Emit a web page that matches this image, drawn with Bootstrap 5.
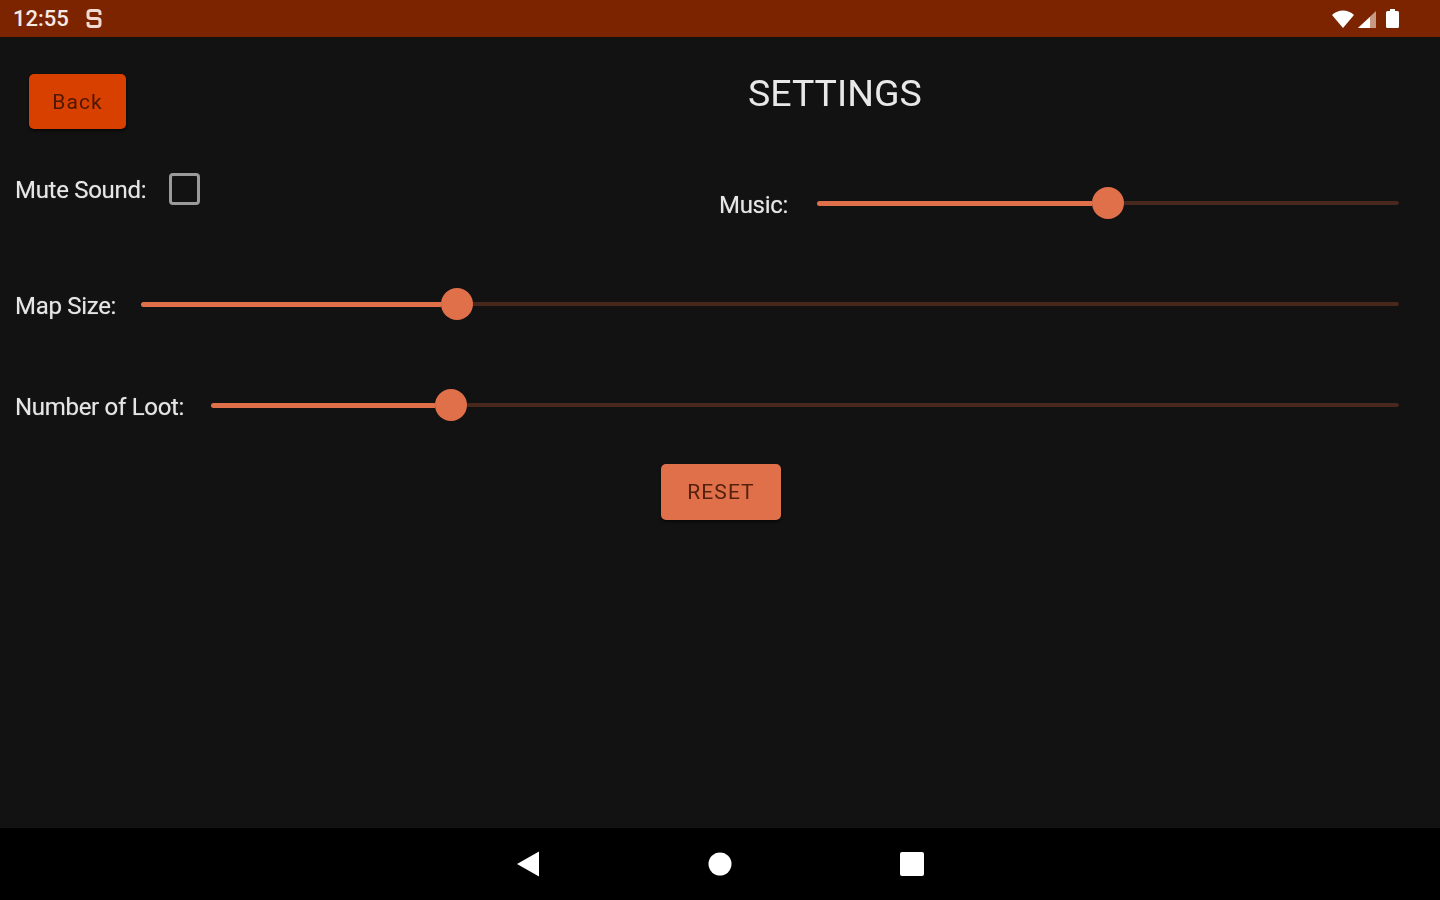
<!DOCTYPE html>
<html lang="en">
<head>
    <meta charset="UTF-8" />
    <meta name="viewport" content="width=device-width, initial-scale=1" />
    <title>Settings</title>
    <link href="https://cdn.jsdelivr.net/npm/bootstrap@5.3.0/dist/css/bootstrap.min.css" rel="stylesheet"/>
    <style>
        html, body { height: 100%; }
        body { background: #121212; color: #e6e6e6; font-family: Roboto, "Liberation Sans", sans-serif; overflow: hidden; }
        .phone-screen { height: 900px; filter: blur(.55px); }
        .status-strip { height: 37px; background: #7c2300; color: #f5e9e4; padding: 0 41px 0 13px; }
        .status-time { font-size: 22px; font-weight: 500; line-height: 1; }
        .status-note { margin-left: 17px; }
        .wifi-icon { margin-right: 3px; }
        .batt-icon { margin-left: 9px; }
        .settings-body { padding: 37px 41px 0 16px; }
        .top-row { height: 92px; }
        .btn-back, .btn-reset { border: 0; border-radius: 5px; font-size: 21px; line-height: 1; padding: 0; letter-spacing: 1.1px; box-shadow: 0 2px 3px rgba(0,0,0,.55); }
        .btn-back { width: 97px; height: 55px; margin-left: 13px; padding-top: 2px; background: #d84000; color: #4f1700; }
        .btn-reset { width: 120px; height: 56px; background: #e0704a; color: #55200c; }
        .page-title { font-size: 37.5px; font-weight: 400; line-height: 1; margin: 0 0 0 622px; padding-top: 1px; color: #e8e8e8; }
        .field-label { font-size: 24px; line-height: 1; letter-spacing: -.3px; white-space: nowrap; margin-top: 4px; margin-left: -1px; text-shadow: 0 0 1px rgba(255,255,255,.45); }
        .mute-row { height: 60px; }
        .mute-col { width: 704px; padding-top: 8px; }
        .music-col { padding-top: 21px; }
        .mute-box { width: 31px; height: 32px; border: 3px solid #9a9a9a; border-radius: 4px; margin-left: 23px; margin-top: -1px; }
        .slider-wrap { height: 32px; }
        .gap-music { margin-left: 29px; }
        .gap-map { margin-left: 25px; }
        .gap-loot { margin-left: 27px; }
        .slider-fill { height: 5px; background: #e0704a; border-radius: 3px 0 0 3px; }
        .slider-rest { height: 4px; background: #48281d; border-radius: 0 3px 3px 0; }
        .slider-knob { width: 32px; height: 32px; border-radius: 50%; background: #e0704a; flex: none; }
        .map-row { margin-top: 62px; }
        .loot-row { margin-top: 69px; }
        .reset-row { margin-top: 43px; padding-left: 645px; }
        .nav-strip { height: 72px; background: #000; margin-top: auto; }
        .nav-slot { width: 192px; }
    </style>
</head>
<body>
<div class="phone-screen d-flex flex-column">
    <div class="status-strip d-flex align-items-center flex-shrink-0">
        <span class="status-time">12:55</span>
        <svg class="status-note" width="16" height="19" viewBox="0 0 16 19"><path d="M14 6 V4 Q14 1.5 11 1.5 H5 Q2 1.5 2 4 V7 Q2 9.5 5 9.5 H11 Q14 9.5 14 12 V15 Q14 17.5 11 17.5 H5 Q2 17.5 2 15 V13" fill="none" stroke="#f0dcd4" stroke-width="3"/></svg>
        <span class="ms-auto d-flex align-items-center">
            <svg class="wifi-icon" width="22" height="18" viewBox="0 0 22 18"><path d="M0 5 C6 -1 16 -1 22 5 L11 18 Z" fill="#fff"/></svg>
            <svg width="20" height="18" viewBox="0 0 20 18"><path d="M19 1 V18 H1 Z" fill="#c79a86"/><path d="M13 7 V18 H1 Z" fill="#fff"/></svg>
            <svg class="batt-icon" width="13" height="19" viewBox="0 0 13 19"><path d="M4 0 H9 V2 H11.5 Q13 2 13 3.5 V17.5 Q13 19 11.5 19 H1.5 Q0 19 0 17.5 V3.5 Q0 2 1.5 2 H4 Z" fill="#fff"/></svg>
        </span>
    </div>

    <div class="settings-body flex-grow-1">
        <div class="top-row d-flex align-items-start">
            <button type="button" class="btn btn-back">Back</button>
            <h1 class="page-title">SETTINGS</h1>
        </div>
        <div class="mute-row d-flex align-items-start">
            <div class="mute-col d-flex align-items-start">
                <span class="field-label">Mute Sound:</span>
                <span class="mute-box"></span>
            </div>
            <div class="music-col flex-grow-1 d-flex align-items-center">
                <span class="field-label">Music:</span>
                <div class="slider-wrap gap-music flex-grow-1 d-flex align-items-center">
                    <div class="slider-fill" style="width: 275px"></div>
                    <div class="slider-knob"></div>
                    <div class="slider-rest flex-grow-1"></div>
                </div>
            </div>
        </div>
        <div class="map-row d-flex align-items-center">
            <span class="field-label">Map Size:</span>
            <div class="slider-wrap gap-map flex-grow-1 d-flex align-items-center">
                <div class="slider-fill" style="width: 300px"></div>
                <div class="slider-knob"></div>
                <div class="slider-rest flex-grow-1"></div>
            </div>
        </div>
        <div class="loot-row d-flex align-items-center">
            <span class="field-label">Number of Loot:</span>
            <div class="slider-wrap gap-loot flex-grow-1 d-flex align-items-center">
                <div class="slider-fill" style="width: 224px"></div>
                <div class="slider-knob"></div>
                <div class="slider-rest flex-grow-1"></div>
            </div>
        </div>
        <div class="reset-row">
            <button type="button" class="btn btn-reset">RESET</button>
        </div>
    </div>

    <div class="nav-strip d-flex align-items-center justify-content-center flex-shrink-0">
        <div class="nav-slot d-flex justify-content-center">
            <svg width="24" height="26" viewBox="0 0 24 26"><path d="M23 0.5 V25.5 L1 13 Z" fill="#fff"/></svg>
        </div>
        <div class="nav-slot d-flex justify-content-center">
            <svg width="24" height="24" viewBox="0 0 24 24"><circle cx="12" cy="12" r="11.5" fill="#fff"/></svg>
        </div>
        <div class="nav-slot d-flex justify-content-center">
            <svg width="24" height="24" viewBox="0 0 24 24"><rect width="24" height="24" rx="2" fill="#fff"/></svg>
        </div>
    </div>
</div>
<script src="https://cdn.jsdelivr.net/npm/bootstrap@5.3.0/dist/js/bootstrap.bundle.min.js"></script>
</body>
</html>
